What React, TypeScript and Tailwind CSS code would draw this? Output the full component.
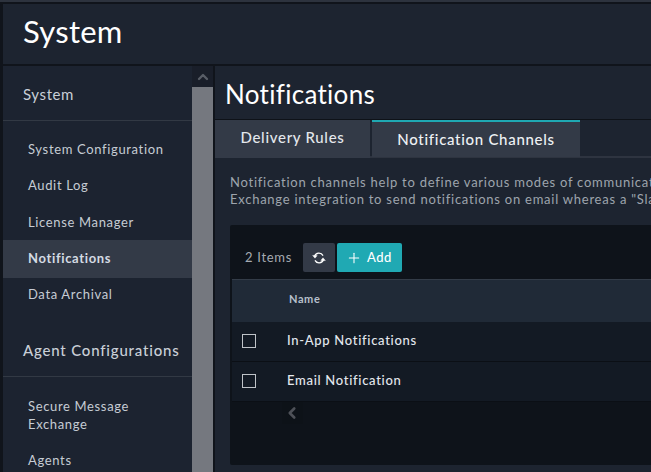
import { Plus, ChevronLeft, ChevronUp } from "lucide-react";

function SideItem({ label, active, className }: { label: string; active?: boolean; className: string }) {
  return (
    <div className={`flex items-center pl-[25px] pr-4 text-[13px] tracking-[0.65px] ${className} ${active ? "bg-[#333a47] text-[#d5dbe3] font-bold pb-[1px]" : "text-[#c6ccd4]"}`}>
      {label}
    </div>
  );
}

function Row({ label }: { label: string }) {
  return (
    <div className="h-[40px] flex items-center bg-[#131a24] border-b border-[#0b0f15]">
      <div className="w-[55px] flex pl-[10px] pb-[1px] shrink-0">
        <div className="w-[14px] h-[14px] border border-[#bfc3c8]" />
      </div>
      <div className="text-[13px] font-medium tracking-[0.7px] text-[#e4e8ee] whitespace-nowrap pb-[1px]">{label}</div>
    </div>
  );
}

function SyncIcon() {
  return (
    <svg width="14" height="14" viewBox="0 0 14 14" fill="none" stroke="white" strokeWidth="1.3">
      <path d="M2.6 5.2A4.6 4.6 0 0 1 11 4.6" />
      <path d="M11.4 8.8A4.6 4.6 0 0 1 3 9.4" />
      <path d="M0.6 4.4L3 7.2L5.2 4.6Z" fill="white" strokeWidth="0.4" />
      <path d="M13.4 9.6L11 6.8L8.8 9.4Z" fill="white" strokeWidth="0.4" />
    </svg>
  );
}

export default function App() {
  return (
    <div className="w-[651px] h-[472px] overflow-hidden bg-[#10141b] flex flex-col font-['Lato',sans-serif]">
      <div className="h-[2px] shrink-0 bg-[#2d333e]" />
      <div className="h-[2px] shrink-0" />
      <div className="flex-1 min-h-0 pl-[3px] flex flex-col">
        <div className="h-[60px] shrink-0 bg-[#1d2430] flex items-center pl-[20px] pb-[5px] text-[31px] text-white tracking-[0.25px]">System</div>
        <div className="h-[2px] shrink-0" />
        <div className="flex flex-1 min-h-0">
          <div className="w-[189px] shrink-0 bg-[#1c2330] overflow-hidden">
            <div className="h-[55px] flex items-center pl-[20px] border-b border-[#323944] text-[15px] tracking-[0.6px] text-[#c9cfd7] pt-[3px]">System</div>
            <div className="h-[11px]" />
            <SideItem label="System Configuration" className="h-[36px]" />
            <SideItem label="Audit Log" className="h-[36px]" />
            <SideItem label="License Manager" className="h-[36px] pt-[2px]" />
            <SideItem label="Notifications" active className="h-[38px]" />
            <SideItem label="Data Archival" className="h-[32px] pt-[2px]" />
            <div className="mt-[16px] h-[51px] flex items-center pl-[20px] pb-[2px] border-b border-[#323944] text-[15px] font-medium tracking-[0.8px] text-[#c9cfd7]">Agent Configurations</div>
            <div className="mt-[20px] pl-[25px] text-[13px] leading-[18px] tracking-[0.65px] text-[#c6ccd4]">Secure Message<br />Exchange</div>
            <div className="mt-[18px] pl-[25px] text-[13px] leading-[18px] tracking-[0.65px] text-[#c6ccd4]">Agents</div>
          </div>
          <div className="w-[21px] shrink-0 flex flex-col">
            <div className="h-[21px] bg-[#191e29] flex items-center justify-center">
              <ChevronUp size={16} strokeWidth={3.5} className="text-[#585d66]" />
            </div>
            <div className="flex-1 bg-[#75787f]" />
          </div>
          <div className="w-[2px] shrink-0" />
          <div className="flex-1 min-w-0 bg-[#1d2430] overflow-hidden">
            <div className="h-[54px] flex items-center pl-[10px] pt-[3px] text-[26px] text-white tracking-[0.3px] border-b border-[#0e1218]">Notifications</div>
            <div className="h-[38px] flex bg-[#1d2430] border-b-2 border-[#2e3440]">
              <div className="w-[155px] h-[38px] bg-[#333a47] flex items-center justify-center text-[15px] tracking-[0.7px] text-[#e3e7ec] font-medium pb-[3px]">Delivery Rules</div>
              <div className="w-[2px]" />
              <div className="w-[208px] h-[37px] bg-[#333a47] border-t-2 border-[#1fa8b2] flex items-center justify-center text-[15px] tracking-[0.7px] text-[#eef1f4] font-medium">Notification Channels</div>
            </div>
            <div className="pl-[15px] pt-[16px] text-[13px] leading-[17px] tracking-[0.75px] text-[#9ea4ad] whitespace-nowrap h-[67px]">
              Notification channels help to define various modes of communication<br />
              Exchange integration to send notifications on email whereas a "Slack"
            </div>
            <div className="ml-[15px] h-[240px] w-[500px] bg-[#0e131a] rounded-[2px]">
              <div className="h-[54px] flex items-end pb-[7px] pl-[15px]">
                <div className="h-[29px] flex items-center text-[13px] tracking-[0.7px] text-[#a6abb2] w-[58px]">2 Items</div>
                <div className="w-[32px] h-[29px] bg-[#333a47] rounded-[2px] flex items-center justify-center">
                  <SyncIcon />
                </div>
                <div className="ml-[2px] w-[65px] h-[29px] bg-[#20a9b3] rounded-[2px] flex items-center justify-center gap-[5px] text-white text-[13px] font-medium tracking-[0.5px] pr-[1px]">
                  <Plus size={16} strokeWidth={1.6} />Add
                </div>
              </div>
              <div className="ml-[2px]">
                <div className="h-[43px] bg-[#202a37] border-t border-[#333c48] flex items-center pl-[57px] pb-[4px] text-[11px] font-bold tracking-[0.6px] text-[#b7c0cc]">Name</div>
                <Row label="In-App Notifications" />
                <Row label="Email Notification" />
                <div className="ml-[50px] w-[21px] h-[22px] bg-[#0d1218] flex items-center">
                  <ChevronLeft size={18} strokeWidth={3.5} className="text-[#4e5158] ml-[1px]" />
                </div>
              </div>
            </div>
          </div>
        </div>
      </div>
    </div>
  );
}
